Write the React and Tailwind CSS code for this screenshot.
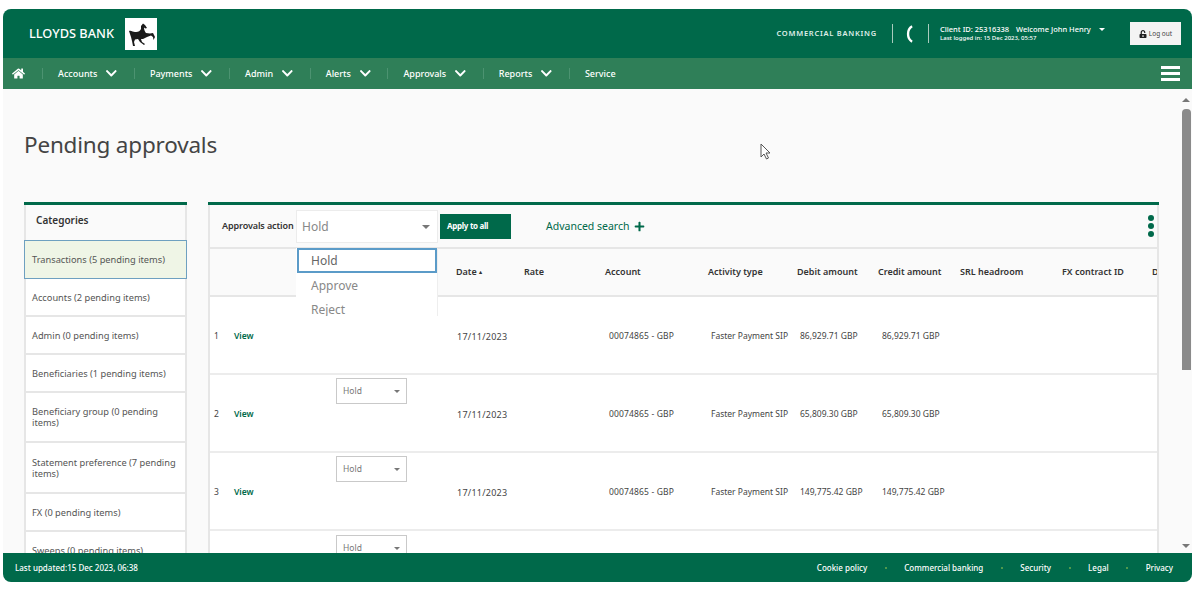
import { FaHome, FaChevronDown, FaUnlockAlt, FaPlus } from 'react-icons/fa';

const font = { fontFamily: '"Noto Sans", "Open Sans", sans-serif' };

const navItems = ['Accounts', 'Payments', 'Admin', 'Alerts', 'Approvals', 'Reports'];

const categories = [
  { label: 'Transactions (5 pending items)', h: 'h-[39px]', active: true },
  { label: 'Accounts (2 pending items)', h: 'h-[38px]' },
  { label: 'Admin (0 pending items)', h: 'h-[38px]' },
  { label: 'Beneficiaries (1 pending items)', h: 'h-[38px]' },
  { label: 'Beneficiary group (0 pending items)', h: 'h-[50px]' },
  { label: 'Statement preference (7 pending items)', h: 'h-[51px]' },
  { label: 'FX (0 pending items)', h: 'h-[38px]' },
  { label: 'Sweeps (0 pending items)', h: 'h-[38px]' },
];

const rows = [
  { n: 1, debit: '86,929.71 GBP', select: false },
  { n: 2, debit: '65,809.30 GBP', select: true },
  { n: 3, debit: '149,775.42 GBP', select: true },
];

const headers = [
  ['Rate', 'w-[81px]'],
  ['Account', 'w-[103px]'],
  ['Activity type', 'w-[89px]'],
  ['Debit amount', 'w-[81px]'],
  ['Credit amount', 'w-[82px]'],
  ['SRL headroom', 'w-[102px]'],
  ['FX contract ID', 'w-[90px]'],
  ['D', 'w-[10px]'],
];

function Horse() {
  return (
    <svg viewBox="0 0 32 32" className="h-[32px] w-[32px] bg-white">
      <path
        fill="#1a1a1a"
        d="M4 13C6 12 8 14 10 14C13 14.500 15 13 16 11L16 8L18 5.500L20 7L22 10L20.500 10.500L19 9.500C19 12 20 14 21 15L25 15.500L28 15L30 19L28.500 22L28 19L26 17.500L22 19L18 21L16 21L17 24L20 26L19 27L15 24L13 21L10 21.500L9 24L10 28L8 28L7 23L6 19L5 16Z"
      />
    </svg>
  );
}

function HoldSelect() {
  return (
    <div className="flex h-[26px] w-[71px] items-center justify-between border border-[#c9c9c9] bg-white pl-[6px] pr-[6px] text-[8.5px] text-[#777]">
      Hold
      <span className="h-0 w-0 border-x-[3px] border-t-[3px] border-x-transparent border-t-[#777]" />
    </div>
  );
}

function Row({ n, debit, select }) {
  return (
    <div className="relative flex h-[78px] shrink-0 border-b-2 border-[#ececec] text-[8.5px] text-[#444]">
      <div className="flex w-[24px] items-center pl-[4px] pt-[3px]">{n}</div>
      <div className="flex w-[102px] items-center pt-[3px] font-semibold text-[#00694a]">View</div>
      <div className="w-[121px] pt-[3px]">{select && <HoldSelect />}</div>
      <div className="flex w-[68px] items-center pt-[3px] text-[9px] tracking-[0.25px]">17/11/2023</div>
      <div className="w-[84px]" />
      <div className="flex w-[102px] items-center pt-[3px] tracking-[0.15px]">00074865 - GBP</div>
      <div className="flex w-[89px] items-center pt-[3px]">Faster Payment SIP</div>
      <div className="flex w-[82px] items-center whitespace-nowrap pt-[3px]">{debit}</div>
      <div className="flex w-[82px] items-center whitespace-nowrap pt-[3px]">{debit}</div>
    </div>
  );
}

export default function App() {
  return (
    <div className="h-[592px] w-[1199px] overflow-hidden bg-white pl-[3px] pt-[9px]" style={font}>
      <div className="relative flex h-[573px] w-[1189px] flex-col overflow-hidden rounded-[8px] bg-[#fafafa]">
        <header className="flex h-[49px] shrink-0 items-center bg-[#00694a] text-white">
          <div className="ml-[26px] mr-[11px] text-[12.75px] font-medium">LLOYDS BANK</div>
          <Horse />
          <div className="ml-auto text-[7.5px] font-semibold tracking-[0.75px] text-[#dfeee8]">COMMERCIAL BANKING</div>
          <div className="ml-[15px] h-[19px] w-[1px] bg-[#a9cbbd]" />
          <svg viewBox="0 0 10 20" className="ml-[11px] h-[18px] w-[9px]" fill="none" stroke="#fff" strokeWidth="2.600">
            <path d="M9 1.500C3 5 3 15 9 18.500" />
          </svg>
          <div className="ml-[15px] h-[19px] w-[1px] bg-[#a9cbbd]" />
          <div className="ml-[11px] w-[190px]">
            <div className="flex items-center text-[7.5px] font-medium leading-[10px]">
              Client ID: 25316338
              <span className="ml-[7px]">Welcome John Henry</span>
              <span className="ml-[8px] h-0 w-0 border-x-[3px] border-t-[3px] border-x-transparent border-t-white" />
            </div>
            <div className="text-[6px] font-medium leading-[9px]">Last logged in: 15 Dec 2023, 05:57</div>
          </div>
          <div className="mr-[11px] flex h-[23px] w-[51px] items-center justify-center gap-[2px] bg-[#f4f4f4] text-[6.5px] text-[#444]">
            <FaUnlockAlt className="text-[8px] text-[#222]" /> Log out
          </div>
        </header>

        <nav className="flex h-[31px] shrink-0 items-center bg-[#2f7f58] text-[9px] font-medium text-white">
          <FaHome className="ml-[9px] text-[13px]" />
          <div className="ml-[17px] h-[11px] w-[1px] bg-[#4c9371]" />
          {navItems.map((item) => (
            <div key={item} className="flex items-center">
              <span className="ml-[15px]">{item}</span>
              <FaChevronDown className="ml-[8px] text-[12.600px]" />
              <div className="ml-[16px] h-[11px] w-[1px] bg-[#4c9371]" />
            </div>
          ))}
          <span className="ml-[15px]">Service</span>
          <div className="ml-auto mr-[12px] flex w-[19px] flex-col gap-[3px]">
            <span className="h-[3px] bg-white" />
            <span className="h-[3px] bg-white" />
            <span className="h-[3px] bg-white" />
          </div>
        </nav>

        <div className="flex min-h-0 flex-1">
          <main className="min-w-0 flex-1 overflow-hidden pl-[21px]">
            <h1 className="mt-[39px] h-[74px] text-[22.5px] font-normal leading-[34px] tracking-[-0.2px] text-[#444]">Pending approvals</h1>

            <div className="flex items-start">
              <aside className="w-[163px] shrink-0 border-t-[3px] border-[#00694a]">
                <div className="flex h-[35px] items-center border-x-2 border-[#e6e6e6] pb-[4px] pl-[10px] text-[10px] font-semibold text-[#333]">
                  Categories
                </div>
                {categories.map((c) => (
                  <div
                    key={c.label}
                    className={`flex items-center text-[9.25px] leading-[11px] text-[#555] ${c.h} ${
                      c.active
                        ? 'border border-[#6ea0c0] bg-[#eff5e6] pl-[7px] pr-[6px]'
                        : 'border-x-2 border-b-2 border-[#e6e6e6] bg-white px-[6px]'
                    }`}
                  >
                    {c.label}
                  </div>
                ))}
              </aside>

              <section className="relative ml-[21px] w-[951px] shrink-0 border-t-[3px] border-[#00694a]">
                <div className="flex h-[44px] items-center border-x-2 border-b-2 border-[#e6e6e6] pl-[12px]">
                  <span className="w-[74px] whitespace-nowrap text-[9px] font-semibold tracking-[-0.1px] text-[#333]">Approvals action</span>
                  <div className="flex h-[33px] w-[142px] items-center justify-between border border-[#ececec] bg-white pl-[5px] pr-[7px] pt-[1px] text-[12px] text-[#888]">
                    Hold
                    <span className="h-0 w-0 border-x-[4px] border-t-[4px] border-x-transparent border-t-[#777]" />
                  </div>
                  <button className="ml-[2px] h-[25px] w-[71px] bg-[#00694a] pl-[7px] text-left text-[8px] font-bold tracking-[-0.3px] text-white">Apply to all</button>
                  <span className="ml-[35px] pt-[2px] text-[10.5px] text-[#00694a]">Advanced search</span>
                  <FaPlus className="ml-[4px] text-[11px] text-[#00694a]" />
                  <div className="ml-auto mr-[3px] flex flex-col gap-[2px]">
                    <span className="h-[6px] w-[6px] rounded-full bg-[#00694a]" />
                    <span className="h-[6px] w-[6px] rounded-full bg-[#00694a]" />
                    <span className="h-[6px] w-[6px] rounded-full bg-[#00694a]" />
                  </div>
                </div>

                <div className="h-[305px] overflow-hidden border-x-2 border-[#e6e6e6] bg-white">
                  <div className="flex h-[48px] items-center overflow-hidden whitespace-nowrap border-b-2 border-[#e6e6e6] bg-[#fafafa] pl-[246px] text-[9px] font-semibold text-[#333]">
                    <div className="flex w-[68px] shrink-0 items-center gap-[2px]">
                      Date <span className="text-[6px]">▴</span>
                    </div>
                    {headers.map(([label, w]) => (
                      <div key={label} className={`${w} shrink-0`}>{label}</div>
                    ))}
                  </div>
                  {rows.map((r) => <Row key={r.n} {...r} />)}
                  <div className="pl-[126px] pt-[4px]"><HoldSelect /></div>
                </div>

                {/* open dropdown over the table */}
                <div className="absolute left-[88px] top-[43px] h-[68px] w-[142px] overflow-hidden border-r border-[#eeeeee] bg-white text-[12px] text-[#888]">
                  <div className="ml-[1px] flex h-[25px] items-center border-2 border-[#5b9bc8] pl-[12px] text-[#666]">Hold</div>
                  <div className="flex h-[25px] items-center pl-[15px]">Approve</div>
                  <div className="flex h-[24px] items-center pl-[15px]">Reject</div>
                </div>
              </section>
            </div>
          </main>

          <div className="flex w-[12px] shrink-0 flex-col items-center">
            <span className="mt-[9px] h-0 w-0 border-x-[4px] border-b-[4px] border-x-transparent border-b-[#777]" />
            <div className="mt-[7px] h-[261px] w-[9px] rounded-t-[4px] bg-[#8a8a8a]" />
            <span className="mb-[5px] mt-auto h-0 w-0 border-x-[4px] border-t-[4px] border-x-transparent border-t-[#777]" />
          </div>
        </div>

        <footer className="flex h-[29px] shrink-0 items-center bg-[#00694a] pl-[12px] pr-[19px] text-[8px] font-medium text-white">
          <span>Last updated:15 Dec 2023, 06:38</span>
          <div className="ml-auto flex items-center">
            {['Cookie policy', 'Commercial banking', 'Security', 'Legal', 'Privacy'].map((l, i) => (
              <div key={l} className="flex items-center">
                {i > 0 && <span className="mx-[17.500px] h-[2px] w-[2px] rounded-full bg-[#6aa84f]" />}
                {l}
              </div>
            ))}
          </div>
        </footer>

        {/* mouse pointer captured in the screenshot */}
        <svg viewBox="0 0 12 18" className="absolute left-[757px] top-[134px] h-[18px] w-[12px]" fill="white" stroke="#555" strokeWidth="1">
          <path d="M1 1v13l3-3 2.500 5 2-1-2.500-5h4z" />
        </svg>
      </div>
    </div>
  );
}
